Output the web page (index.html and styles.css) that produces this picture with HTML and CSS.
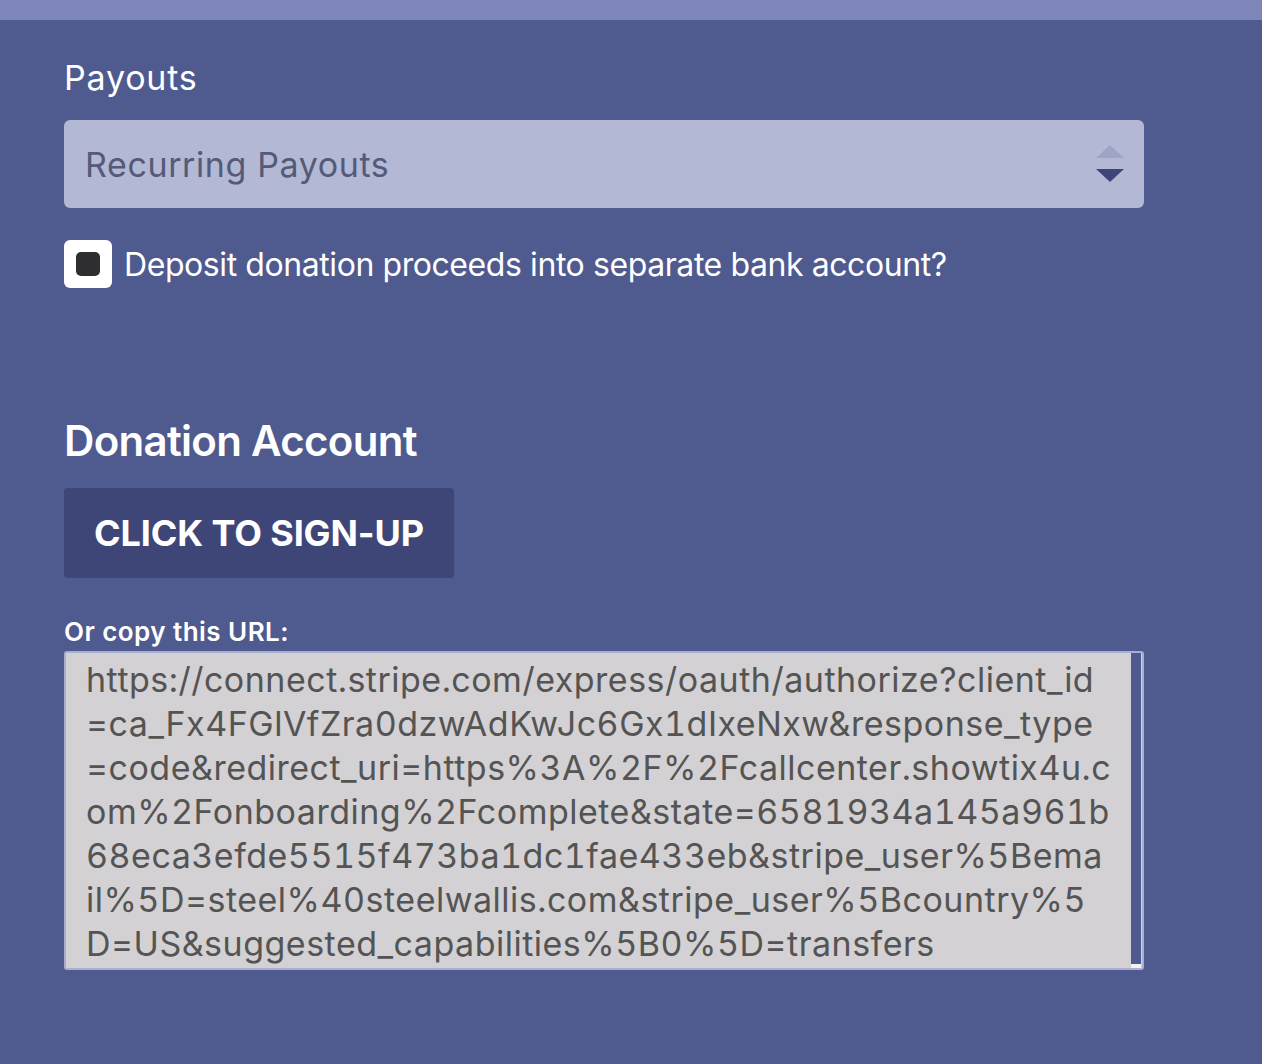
FILE: index.html
```html
<!DOCTYPE html>
<html lang="en">
<head>
<meta charset="utf-8">
<title>Payouts</title>
<link rel="stylesheet" href="styles.css">
</head>
<body>
<div class="topbar"></div>
<main class="form">
  <label class="field-label">Payouts</label>
  <div class="select">
    <span class="select-value">Recurring Payouts</span>
    <svg class="select-arrows" width="28" height="38" viewBox="0 0 28 38">
      <polygon points="14,0 28,13 0,13" fill="#9ea4c6"/>
      <polygon points="0,24 28,24 14,37" fill="#3e4677"/>
    </svg>
  </div>
  <div class="check-row">
    <span class="checkbox"><span class="check-mark"></span></span>
    <span class="check-label">Deposit donation proceeds into separate bank account?</span>
  </div>
  <h2 class="section-title">Donation Account</h2>
  <button class="signup-btn">CLICK TO SIGN-UP</button>
  <div class="url-label">Or copy this URL:</div>
  <div class="url-box">
    <div class="url-text">
      <span class="url-line">https://connect.stripe.com/express/oauth/authorize?client_id</span>
      <span class="url-line">=ca_Fx4FGlVfZra0dzwAdKwJc6Gx1dIxeNxw&amp;response_type</span>
      <span class="url-line">=code&amp;redirect_uri=https%3A%2F%2Fcallcenter.showtix4u.c</span>
      <span class="url-line">om%2Fonboarding%2Fcomplete&amp;state=6581934a145a961b</span>
      <span class="url-line">68eca3efde5515f473ba1dc1fae433eb&amp;stripe_user%5Bema</span>
      <span class="url-line">il%5D=steel%40steelwallis.com&amp;stripe_user%5Bcountry%5</span>
      <span class="url-line">D=US&amp;suggested_capabilities%5B0%5D=transfers</span>
    </div>
    <div class="scrollbar"><div class="scroll-end"></div></div>
  </div>
</main>
</body>
</html>
```
FILE: styles.css
```css
* { box-sizing: border-box; }
html, body {
  margin: 0;
  padding: 0;
}
body {
  background: #4f5a8f;
  font-family: Inter, "Liberation Sans", sans-serif;
  color: #ffffff;
  min-height: 1064px;
}
.topbar {
  height: 20px;
  background: #7e86b9;
}
.form {
  padding: 0 64px;
  width: 1144px;
  display: flex;
  flex-direction: column;
  align-items: flex-start;
}
.field-label {
  margin-top: 38px;
  height: 40px;
  line-height: 40px;
  font-size: 34px;
  font-weight: 400;
  letter-spacing: 0.8px;
}
.select {
  margin-top: 22px;
  width: 1080px;
  height: 88px;
  background: #b3b8d5;
  border-radius: 6px;
  display: flex;
  align-items: center;
  justify-content: space-between;
  padding: 0 20px 0 21px;
}
.select-value {
  font-size: 34px;
  color: #545a78;
  letter-spacing: 0.6px;
}
.select-arrows {
  display: block;
  margin-top: 0;
}
.check-row {
  margin-top: 32px;
  display: flex;
  align-items: center;
  height: 48px;
}
.checkbox {
  width: 48px;
  height: 48px;
  background: #ffffff;
  border-radius: 6px;
  display: flex;
  align-items: center;
  justify-content: center;
}
.check-mark {
  width: 24px;
  height: 24px;
  background: #2e2e30;
  border-radius: 5px;
}
.check-label {
  margin-left: 12px;
  font-size: 32px;
  letter-spacing: -0.42px;
}
.section-title {
  margin: 128px 0 0;
  height: 50px;
  line-height: 50px;
  font-size: 42px;
  font-weight: 600;
  letter-spacing: -0.7px;
}
.signup-btn {
  margin-top: 22px;
  width: 390px;
  height: 90px;
  background: #3e4677;
  border: none;
  border-radius: 4px;
  color: #ffffff;
  font-family: Inter, "Liberation Sans", sans-serif;
  font-size: 36px;
  font-weight: 700;
  letter-spacing: -0.13px;
  padding: 0;
}
.url-label {
  margin-top: 39px;
  height: 30px;
  line-height: 30px;
  font-size: 26px;
  font-weight: 600;
  letter-spacing: 0.45px;
}
.url-box {
  margin-top: 4px;
  width: 1080px;
  height: 319px;
  background: #d3d1d3;
  border: 2px solid #a9aed0;
  border-radius: 3px;
  display: flex;
  justify-content: space-between;
}
.url-text {
  padding: 5px 0 0 20px;
  display: flex;
  flex-direction: column;
  color: #545454;
  font-size: 34px;
  line-height: 44px;
  letter-spacing: 0.5px;
  font-variant-numeric: tabular-nums;
}
.url-line {
  white-space: nowrap;
}
.scrollbar {
  width: 10px;
  margin-right: 1px;
  background: #4f5a8f;
  display: flex;
  flex-direction: column;
  justify-content: flex-end;
}
.scroll-end {
  height: 4px;
  background: #f2f2f2;
}
```
